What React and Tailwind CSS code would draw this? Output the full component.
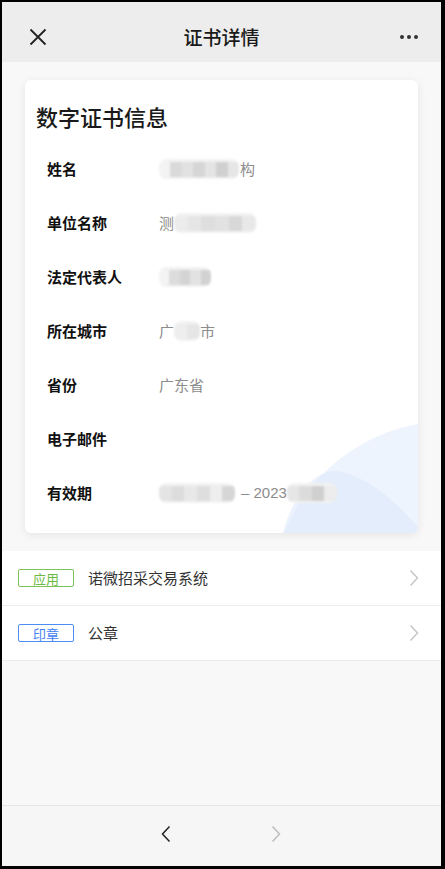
import React from 'react';

const cjk = { fontFamily: '"Noto Sans CJK SC", "Noto Sans", sans-serif' };

function Mosaic({ w, tones }) {
  // blurred pixel block standing in for hidden text
  return (
    <span className="inline-flex h-[20px] items-center overflow-hidden rounded-[8px] bg-[#f2f2f2] align-middle blur-[0.8px]" style={{ width: w }}>
      {tones.map((t, i) => (
        <span key={i} className="h-[15px] flex-1" style={{ background: t }} />
      ))}
    </span>
  );
}

function Row({ label, children }) {
  return (
    <div className="flex h-[54px] items-center">
      <div className="w-[112px] text-[15px] font-bold text-[#111]">{label}</div>
      <div className="flex items-center text-[15px] text-[#8c8c8c]">{children}</div>
    </div>
  );
}

function Tag({ children, color }) {
  return (
    <span
      className={`flex h-[18px] w-[56px] items-center justify-center rounded-[2px] border text-[13px] leading-none ${color}`}
    >
      {children}
    </span>
  );
}

function Chevron({ dir = 'right', className }) {
  return (
    <svg width="10" height="18" viewBox="0 0 10 18" className={className}>
      <path
        d={dir === 'right' ? 'M1.5 1.5 L8.5 9 L1.5 16.5' : 'M8.5 1.5 L1.5 9 L8.5 16.5'}
        fill="none"
        stroke="currentColor"
        strokeWidth="1.5"
      />
    </svg>
  );
}

export default function App() {
  return (
    <div className="h-[869px] w-[445px] bg-black pb-[3px] pl-[2px] pr-[4px] pt-[2px]" style={cjk}>
      <div className="flex h-full flex-col bg-[#f8f8f8]">
        <div className="flex h-[60px] items-center bg-[#ededed] pt-[10px]">
          <div className="flex w-[70px] justify-center pl-[2px]">
            <svg width="18" height="18" viewBox="0 0 18 18">
              <path d="M1.5 1.5 L16.5 16.5 M16.5 1.5 L1.5 16.5" stroke="#222" strokeWidth="1.8" fill="none" />
            </svg>
          </div>
          <div className="flex-1 text-center text-[19px] font-medium text-[#1a1a1a]">证书详情</div>
          <div className="flex w-[70px] justify-center gap-[3px] pl-[6px]">
            <span className="h-[4px] w-[4px] rounded-full bg-[#333]" />
            <span className="h-[4px] w-[4px] rounded-full bg-[#333]" />
            <span className="h-[4px] w-[4px] rounded-full bg-[#333]" />
          </div>
        </div>

        <div className="relative mx-[23px] mt-[18px] h-[453px] overflow-hidden rounded-[6px] bg-white pb-[13px] shadow-[0_2px_10px_rgba(0,0,0,0.08)]">
          <svg className="absolute inset-0" width="393" height="453">
            <circle cx="425" cy="520" r="179" fill="#eef4fd" />
            <path
              d="M258 453 C268 412 292 391 309 391 C336 392 370 420 393 447 L393 453 Z"
              fill="#d6e5fa"
              fillOpacity="0.45"
            />
          </svg>
          <div className="relative">
            <div className="pl-[11px] pt-[21px] text-[22px] font-medium leading-[30px] text-[#1a1a1a]">数字证书信息</div>
            <div className="mt-[11px] pl-[22px]">
              <Row label="姓名">
                <Mosaic w={80} tones={['#f3f3f3', '#dadada', '#e2e2e2', '#d6d6d6', '#e4e4e4', '#d0d0d0', '#e6e6e6']} />
                <span className="ml-[1px]">构</span>
              </Row>
              <Row label="单位名称">
                <span>测</span>
                <Mosaic w={82} tones={['#ececec', '#e6e6e6', '#dedede', '#e2e2e2', '#d8d8d8', '#e8e8e8']} />
              </Row>
              <Row label="法定代表人">
                <Mosaic w={52} tones={['#f4f4f4', '#dcdcdc', '#d4d4d4', '#e2e2e2', '#d2d2d2']} />
              </Row>
              <Row label="所在城市">
                <span>广</span>
                <Mosaic w={26} tones={['#eeeeee', '#e6e6e6']} />
                <span>市</span>
              </Row>
              <Row label="省份">
                <span>广东省</span>
              </Row>
              <Row label="电子邮件">
                <span />
              </Row>
              <Row label="有效期">
                <Mosaic w={76} tones={['#e4e4e4', '#dcdcdc', '#e8e8e8', '#dedede', '#eeeeee', '#d6d6d6']} />
                <span className="ml-[6px]" style={{ fontFamily: '"Liberation Sans", "Noto Sans CJK SC", sans-serif' }}>– 2023</span>
                <Mosaic w={50} tones={['#e6e6e6', '#dcdcdc', '#d0d0d0', '#ececec']} />
              </Row>
            </div>
          </div>
        </div>

        <div className="mt-[18px] bg-white">
          <div className="flex h-[55px] items-center border-b border-[#ececec] pl-[16px] pr-[22px]">
            <Tag color="border-[#7cc35a] text-[#6cba46]">应用</Tag>
            <span className="ml-[14px] flex-1 text-[15px] text-[#333]">诺微招采交易系统</span>
            <Chevron className="text-[#c6c6c6]" />
          </div>
          <div className="flex h-[55px] items-center border-b border-[#ececec] pl-[16px] pr-[22px]">
            <Tag color="border-[#4d8cf5] text-[#3f80f2]">印章</Tag>
            <span className="ml-[14px] flex-1 text-[15px] text-[#333]">公章</span>
            <Chevron className="text-[#c6c6c6]" />
          </div>
        </div>

        <div className="flex-1" />

        <div className="flex h-[61px] items-center justify-center gap-[100px] border-t border-[#e6e6e6] bg-[#f6f6f6] pb-[4px] pr-[2px]">
          <Chevron dir="left" className="text-[#222]" />
          <Chevron dir="right" className="text-[#bdbdbd]" />
        </div>
      </div>
    </div>
  );
}
